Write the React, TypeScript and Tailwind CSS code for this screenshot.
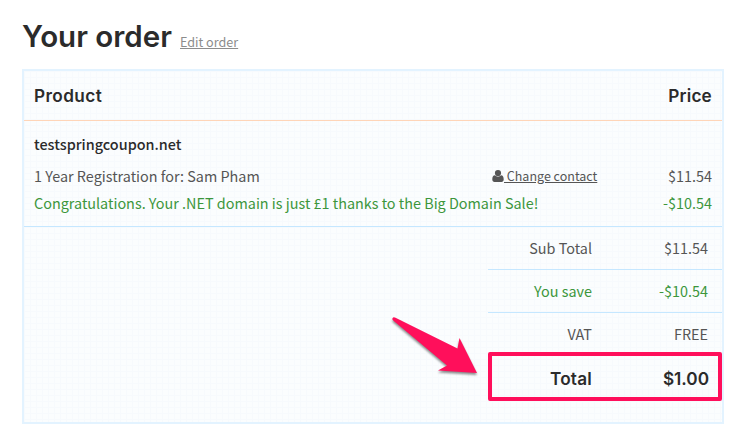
const summary = [
  { label: "Sub Total", value: "$11.54", color: "text-[#555]" },
  { label: "You save", value: "-$10.54", color: "text-[#3c963c]" },
];

function UserIcon() {
  return (
    <svg className="w-[12px] h-[12px] mt-px" viewBox="0 0 12 12" fill="currentColor">
      <circle cx="6" cy="3.1" r="3.1" />
      <path d="M3 5.3C1 5.4.3 7 .3 9.6C.3 11.200 1.200 12 2.500 12H9.500C10.800 12 11.700 11.200 11.700 9.600C11.700 7 11 5.400 9 5.300C7.400 7.100 4.600 7.100 3 5.300Z" />
    </svg>
  );
}

export default function App() {
  return (
    <main className="w-[748px] h-[446px] bg-white overflow-hidden pl-[22px] text-[14.4px] leading-[27px] text-[#555] font-['Noto_Sans_CJK_SC',sans-serif]">
      {/* HEADING */}
      <div className="h-[69px] pt-[16px] flex items-baseline">
        <h1 className="w-[158px] text-[29.5px] leading-[40px] font-semibold text-[#2b2b2b] whitespace-nowrap font-['Inter',sans-serif]">
          Your order
        </h1>
        <a href="#" className="text-[12.6px] leading-[20px] text-[#8c8c8c] underline whitespace-nowrap">
          Edit order
        </a>
      </div>

      {/* ORDER TABLE */}
      <section className="relative w-[702px] h-[355px] border-2 border-[#e3f3ff] bg-[#fbfdfe] bg-[linear-gradient(to_right,#f7fafd_1px,transparent_1px),linear-gradient(to_bottom,#f7fafd_1px,transparent_1px)] bg-[size:6px_6px]">
        <div className="h-[50px] px-[10px] flex items-center justify-between border-b border-[#ffd5b8] text-[17.2px] tracking-[0.4px] font-semibold text-[#2b2b2b] font-['Inter',sans-serif]">
          <h2>Product</h2>
          <h2 className="tracking-[0.2px]">Price</h2>
        </div>

        {/* DOMAIN */}
        <div className="h-[106px] px-[10px] pt-[9px] border-b border-[#c5e7ff]">
          <h3 className="h-[32px] font-medium text-[#2b2b2b]">testspringcoupon.net</h3>
          <div className="flex">
            <p className="w-[458px]">1 Year Registration for: Sam Pham</p>
            <a href="#" className="flex items-center text-[12.5px]">
              <UserIcon />
              <span className="underline whitespace-pre"> Change contact</span>
            </a>
            <p className="ml-auto">$11.54</p>
          </div>
          <div className="flex justify-between text-[#3c963c]">
            <p>Congratulations. Your .NET domain is just £1 thanks to the Big Domain Sale!</p>
            <p>-$10.54</p>
          </div>
        </div>

        {/* SUMMARY */}
        <div className="ml-auto w-[234px]">
          {summary.map((row) => (
            <div
              key={row.label}
              className={`h-[43px] pl-[10px] pr-[14px] pb-[2px] flex items-center border-b border-[#c5e7ff] ${row.color}`}
            >
              <span className="w-[94px] text-right">{row.label}</span>
              <span className="ml-auto">{row.value}</span>
            </div>
          ))}
          <div className="h-[39px] pl-[10px] pr-[14px] pt-[7px] flex">
            <span className="w-[94px] text-right">VAT</span>
            <span className="ml-auto">FREE</span>
          </div>
          <div className="h-[49px] pt-[4px] pl-[6px] pr-[9px] flex items-center border-4 border-[#ff0f5b] rounded-[2px] text-[17.2px] tracking-[0.2px] font-semibold text-[#2b2b2b] font-['Inter',sans-serif]">
            <span className="w-[94px] text-right">Total</span>
            <span className="ml-auto tracking-normal">$1.00</span>
          </div>
        </div>

        {/* ARROW */}
        <svg
          className="absolute left-[356px] top-[229px] drop-shadow-[0_2px_1px_rgba(0,0,0,0.45)]"
          width="120"
          height="100"
          viewBox="0 0 120 100"
          fill="#ff0f5b"
        >
          <path d="M12.5 18.2Q13.5 16.6 15.5 17.8L77.5 48.5L79.5 38L97 73L58 70.5L67 65.5L13.2 20.5Q12 19.5 12.5 18.2Z" />
        </svg>
      </section>
    </main>
  );
}
